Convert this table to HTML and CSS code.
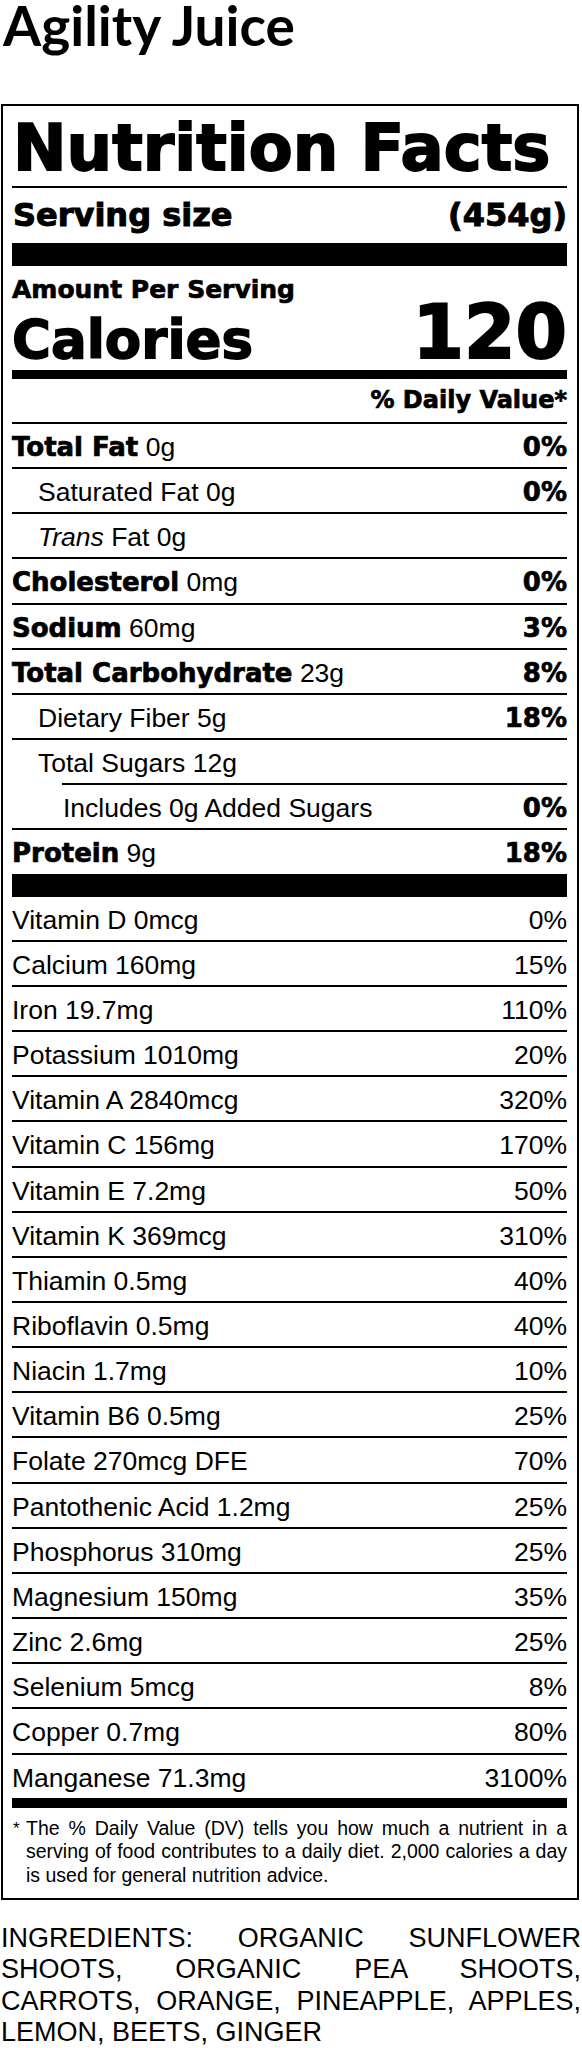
FILE: index.html
```html
<!DOCTYPE html>
<html lang="en">
<head>
<meta charset="utf-8">
<title>Agility Juice</title>
<link rel="stylesheet" href="styles.css">
</head>
<body>
<div class="page">
  <h1 class="title">Agility Juice</h1>
  <section class="label">
    <header class="nf-head">Nutrition Facts</header>
    <div class="serving"><span>Serving size</span><span>(454g)</span></div>
    <div class="amount">Amount Per Serving</div>
    <div class="calories"><span class="cal-label">Calories</span><span class="cal-value">120</span></div>
    <div class="dv-head">% Daily Value*</div>
    <div class="group">
      <div class="row"><span><b>Total Fat</b> 0g</span><b>0%</b></div>
      <div class="row indent"><span>Saturated Fat 0g</span><b>0%</b></div>
      <div class="row indent"><span><i>Trans</i> Fat 0g</span></div>
      <div class="row"><span><b>Cholesterol</b> 0mg</span><b>0%</b></div>
      <div class="row"><span><b>Sodium</b> 60mg</span><b>3%</b></div>
      <div class="row"><span><b>Total Carbohydrate</b> 23g</span><b>8%</b></div>
      <div class="row indent"><span>Dietary Fiber 5g</span><b>18%</b></div>
      <div class="row indent"><span>Total Sugars 12g</span></div>
      <div class="row indent2"><span>Includes 0g Added Sugars</span><b>0%</b></div>
      <div class="row"><span><b>Protein</b> 9g</span><b>18%</b></div>
    </div>
    <div class="bar-thick"></div>
    <div class="group vitamins">
      <div class="row"><span>Vitamin D 0mcg</span><span>0%</span></div>
      <div class="row"><span>Calcium 160mg</span><span>15%</span></div>
      <div class="row"><span>Iron 19.7mg</span><span>110%</span></div>
      <div class="row"><span>Potassium 1010mg</span><span>20%</span></div>
      <div class="row"><span>Vitamin A 2840mcg</span><span>320%</span></div>
      <div class="row"><span>Vitamin C 156mg</span><span>170%</span></div>
      <div class="row"><span>Vitamin E 7.2mg</span><span>50%</span></div>
      <div class="row"><span>Vitamin K 369mcg</span><span>310%</span></div>
      <div class="row"><span>Thiamin 0.5mg</span><span>40%</span></div>
      <div class="row"><span>Riboflavin 0.5mg</span><span>40%</span></div>
      <div class="row"><span>Niacin 1.7mg</span><span>10%</span></div>
      <div class="row"><span>Vitamin B6 0.5mg</span><span>25%</span></div>
      <div class="row"><span>Folate 270mcg DFE</span><span>70%</span></div>
      <div class="row"><span>Pantothenic Acid 1.2mg</span><span>25%</span></div>
      <div class="row"><span>Phosphorus 310mg</span><span>25%</span></div>
      <div class="row"><span>Magnesium 150mg</span><span>35%</span></div>
      <div class="row"><span>Zinc 2.6mg</span><span>25%</span></div>
      <div class="row"><span>Selenium 5mcg</span><span>8%</span></div>
      <div class="row"><span>Copper 0.7mg</span><span>80%</span></div>
      <div class="row"><span>Manganese 71.3mg</span><span>3100%</span></div>
    </div>
    <div class="bar-medium"></div>
    <div class="footnote">
      <span class="ast">*</span>
      <p>The % Daily Value (DV) tells you how much a nutrient in a serving of food contributes to a daily diet. 2,000 calories a day is used for general nutrition advice.</p>
    </div>
  </section>
  <p class="ingredients">INGREDIENTS: ORGANIC SUNFLOWER SHOOTS, ORGANIC PEA SHOOTS, CARROTS, ORANGE, PINEAPPLE, APPLES, LEMON, BEETS, GINGER</p>
</div>
</body>
</html>
```
FILE: styles.css
```css
html, body {
  margin: 0;
  padding: 0;
  background: #fff;
  color: #000;
}

.page {
  padding: 0 1px;
  font-family: "Liberation Sans", Arial, sans-serif;
}

.title {
  font-family: Lato, "Liberation Sans", sans-serif;
  font-weight: 700;
  font-size: 55px;
  line-height: 64px;
  margin: -7px 0 47px 2px;
  color: #000;
}

.label {
  border: 2px solid #000;
  margin: 0 2px 0 0;
  padding: 0 10px 0 9px;
}

.nf-head,
.serving,
.amount,
.calories,
.dv-head,
.row b {
  font-family: "DejaVu Sans", "Liberation Sans", sans-serif;
  font-weight: 700;
  -webkit-text-stroke: 0.7px #000;
}

.nf-head {
  font-size: 64px;
  line-height: 64px;
  padding: 10px 0 6px 1px;
  border-bottom: 2px solid #000;
  white-space: nowrap;
  -webkit-text-stroke: 1.8px #000;
}

.serving {
  display: flex;
  justify-content: space-between;
  font-size: 32px;
  line-height: 36px;
  padding: 9px 0 10px 1px;
  border-bottom: 23px solid #000;
  -webkit-text-stroke: 1px #000;
}

.amount {
  font-size: 25px;
  line-height: 28px;
  padding-top: 10px;
}

.calories {
  display: flex;
  justify-content: space-between;
  align-items: baseline;
  padding-bottom: 4px;
  border-bottom: 9px solid #000;
}

.cal-label {
  font-size: 53px;
  line-height: 52px;
  -webkit-text-stroke: 1.5px #000;
}

.cal-value {
  font-size: 74px;
  line-height: 56px;
  -webkit-text-stroke: 2px #000;
}

.dv-head {
  text-align: right;
  font-size: 24px;
  line-height: 28px;
  padding: 7px 0 8px;
  border-bottom: 2px solid #000;
}

.row {
  display: flex;
  justify-content: space-between;
  align-items: baseline;
  font-size: 26.5px;
  line-height: 40.15px;
  padding-top: 3px;
  white-space: nowrap;
}

.row b {
  font-size: 26px;
}

.group .row + .row {
  border-top: 2px solid #000;
}

.row.indent {
  padding-left: 26px;
}

.row.indent2 {
  margin-left: 50px;
  padding-left: 1px;
}

.bar-thick {
  height: 23px;
  background: #000;
}

.bar-medium {
  height: 10px;
  background: #000;
}

.footnote {
  display: flex;
  padding: 9px 0 11px;
  font-size: 19.5px;
  line-height: 23.5px;
}

.footnote .ast {
  flex: 0 0 13px;
  font-size: 17px;
  padding-left: 1px;
}

.footnote p {
  margin: 0;
  text-align: justify;
  flex: 1;
}

.ingredients {
  margin: 23px 0 0;
  font-size: 27px;
  line-height: 31.3px;
  text-align: justify;
}
```
